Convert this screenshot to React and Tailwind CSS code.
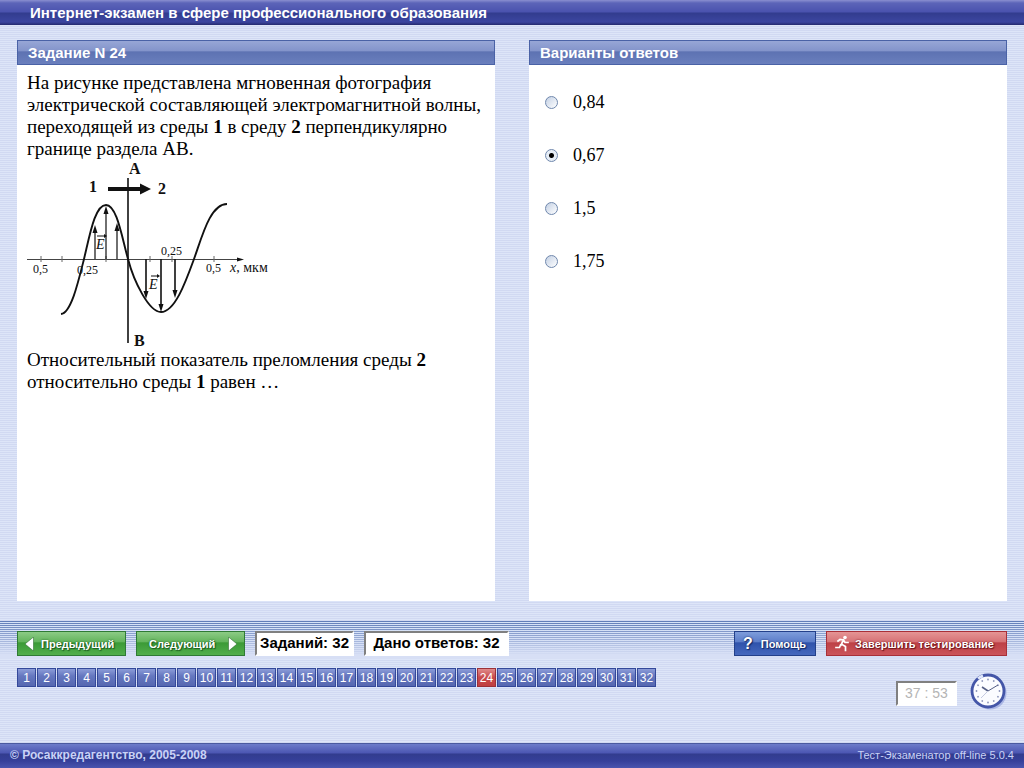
import { useState } from 'react'

const answers = ['0,84', '0,67', '1,5', '1,75']

const stripes = 'bg-[repeating-linear-gradient(to_bottom,#d1d9f2_0px,#d1d9f2_1px,#dde5f8_1px,#dde5f8_2px)]'

const btnText = 'text-[11px] leading-[16px] font-bold whitespace-nowrap text-white'

const WaveChart = () => (
  <svg className="block overflow-visible" width="250" height="189" viewBox="0 0 250 189" role="img" aria-label="E(x)">
    <g fill="none" stroke="#111">
      <path d="M0 99.500H213" strokeWidth="1" stroke="#444" />
      <path d="M14 96v6M35 96v6M79 96v6M123 96v6M145 96v6M187 96v6" stroke="#666" />
      <path d="M101 18V183" strokeWidth="1.600" />
      <path
        d="M34 154C44 153 51 123 57 99C63 74 68 45 79 45C90 45 95 78 101 99C107 122 122 152 134 152C148 152 159 121 167 99C175 77 183 44 200 44"
        strokeWidth="1.900"
      />
      <path d="M68 99V69M79 99V50M90 99V67" strokeWidth="1.200" />
      <path d="M119 99V135M134 99V148M148 99V134" strokeWidth="1.600" />
      <path d="M81 29H114" strokeWidth="4" />
    </g>
    <g fill="#111">
      <path d="M124 29l-11-5.500v11z" />
      <path d="M217 99.500l-7-2v4z" />
      <path d="M68 65l-2.500 8h5zM79 46l-2.500 8h5zM90 63l-2.500 8h5z" />
      <path d="M119 139l-2.500-8h5zM134 152l-2.500-8h5zM148 138l-2.500-8h5z" />
      <path d="M70 75.500h7v-1.500l3 2-3 2v-1.500h-7zM124 115.500h6v-1.500l3 2-3 2v-1.500h-6z" />
    </g>
    <g fill="#111" fontFamily="'Liberation Serif', serif" fontSize="12">
      <text x="6" y="113">0,5</text>
      <text x="50" y="114">0,25</text>
      <text x="134" y="95">0,25</text>
      <text x="179" y="112">0,5</text>
      <text x="203" y="112" fontSize="14"><tspan fontStyle="italic">x</tspan>, мкм</text>
      <text x="69" y="89" fontSize="14" fontStyle="italic">E</text>
      <text x="122" y="129" fontSize="14" fontStyle="italic">E</text>
      <g fontSize="16" fontWeight="bold">
        <text x="62" y="32">1</text>
        <text x="131" y="34">2</text>
        <text x="102" y="14">A</text>
        <text x="107" y="186">B</text>
      </g>
    </g>
  </svg>
)

const RunnerIcon = () => (
  <svg width="14" height="17" viewBox="0 0 14 17" fill="none" stroke="#fff" strokeLinecap="square">
    <circle cx="10" cy="2.500" r="1.800" fill="#fff" stroke="none" />
    <path d="M3 6l2-1.500 3.500.500L10 7.500h3M8.500 5L6 10M7 9.500l3.500 2V15.500M5.500 10L4.500 12.500H1" strokeWidth="1.700" />
  </svg>
)

const ClockIcon = () => (
  <svg width="37" height="37" viewBox="0 0 37 37" fill="none">
    <circle cx="20" cy="20" r="16.500" fill="#aab6e4" />
    <circle cx="18" cy="18" r="16" fill="#fbfcff" stroke="#4456a8" strokeWidth="2.800" />
    <path d="M8 5.500A16 16 0 0 1 13 2.800" stroke="#dfe6fa" strokeWidth="2.800" />
    <g fill="#8a93b8">
      {Array.from({ length: 12 }).map((_, i) => (
        <circle key={i} cx="18" cy="6.500" r="0.900" transform={`rotate(${i * 30} 18 18)`} />
      ))}
    </g>
    <path d="M18 18L28 12" stroke="#555f85" />
    <path d="M18 18L12 14" stroke="#555f85" strokeWidth="1.600" />
    <path d="M18 18L11 25" stroke="#c4cae0" />
  </svg>
)

const Panel = ({ title, children }) => (
  <section className="flex flex-col bg-white">
    <h2 className="h-[25px] border border-[#4a62a6] bg-[linear-gradient(to_bottom,#97a6d6_0%,#8293ca_45%,#5d72b2_46%,#6a7fbd_100%)] px-[10px] text-[15px] leading-[23px] font-bold text-white">
      {title}
    </h2>
    {children}
  </section>
)

const App = () => {
  const [answer, setAnswer] = useState(1)
  const [task, setTask] = useState(24)

  return (
    <div className={`flex min-h-screen flex-col font-['Liberation_Sans',sans-serif] ${stripes}`}>
      <header className="h-[25px] bg-[linear-gradient(to_bottom,#8a8fd0_0px,#5c64b8_3px,#4a52ae_12px,#323c8e_13px,#3c46a0_22px,#252a6e_25px)] px-[30px]">
        <h1 className="text-[15px] leading-[25px] font-bold text-white">
          Интернет-экзамен в сфере профессионального образования
        </h1>
      </header>

      <main className="grid flex-1 grid-cols-2 gap-[34px] px-[17px] pt-[15px] pb-[20px]">
        <Panel title="Задание N 24">
          <div className="px-[10px] pt-[7px] font-['Liberation_Serif',serif] text-[19px] leading-[22px] text-black">
            <p>
              На рисунке представлена мгновенная фотография<br />
              электрической составляющей электромагнитной волны,<br />
              переходящей из среды <b>1</b> в среду <b>2</b> перпендикулярно<br />
              границе раздела АВ.
            </p>
            <WaveChart />
            <p>
              Относительный показатель преломления среды <b>2</b><br />
              относительно среды <b>1</b> равен …
            </p>
          </div>
        </Panel>

        <Panel title="Варианты ответов">
          <div className="flex flex-col gap-[31px] px-[16px] pt-[26px]">
            {answers.map((text, i) => (
              <label key={text} className="flex items-center gap-[15px] font-['Liberation_Serif',serif] text-[18px] leading-[22px] text-black">
                <input
                  type="radio"
                  name="answer"
                  checked={answer === i}
                  onChange={() => setAnswer(i)}
                  className="size-[13px] appearance-none rounded-full border border-[#7088ad] bg-[linear-gradient(135deg,#c3d0e4,#ffffff)] checked:bg-[radial-gradient(circle,#000_2px,#e6edf6_3px)]"
                />
                {text}
              </label>
            ))}
          </div>
        </Panel>
      </main>

      <div className="flex h-[122px] flex-col bg-[linear-gradient(to_bottom,transparent,#d7dff5_90%),repeating-linear-gradient(to_bottom,#5f7cb8_0px,#5f7cb8_1px,#d5e2f7_1px,#d5e2f7_2px)] bg-[length:100%_38px] bg-no-repeat px-[17px] pt-[10px]">
        <div className="flex gap-[10px]">
          <button className={`flex h-[25px] w-[109px] items-center gap-[7px] border border-[#2f7a35] bg-[linear-gradient(to_bottom,#8ccb85_0%,#62b35b_45%,#3b9a36_46%,#52ae4c_100%)] pl-[7px] [text-shadow:0_0_2px_#1c5c20,1px_1px_1px_#1c5c20] ${btnText}`}>
            <svg width="9" height="14" viewBox="0 0 9 14"><path d="M8.500 0v14L0 7z" fill="#fff" stroke="#1c5c20" strokeWidth="0.500" /></svg>
            Предыдущий
          </button>
          <button className={`flex h-[25px] w-[109px] items-center justify-between border border-[#2f7a35] bg-[linear-gradient(to_bottom,#8ccb85_0%,#62b35b_45%,#3b9a36_46%,#52ae4c_100%)] pr-[7px] pl-[12px] [text-shadow:0_0_2px_#1c5c20,1px_1px_1px_#1c5c20] ${btnText}`}>
            Следующий
            <svg width="9" height="14" viewBox="0 0 9 14"><path d="M.500 0v14L9 7z" fill="#fff" stroke="#1c5c20" strokeWidth="0.500" /></svg>
          </button>
          <p className="h-[25px] w-[99px] border-2 border-t-[#808080] border-r-white border-b-white border-l-[#808080] bg-white text-center text-[15px] leading-[20px] font-bold whitespace-nowrap text-black">
            Заданий: 32
          </p>
          <p className="h-[25px] w-[145px] border-2 border-t-[#808080] border-r-white border-b-white border-l-[#808080] bg-white text-center text-[15px] leading-[20px] font-bold whitespace-nowrap text-black">
            Дано ответов: 32
          </p>
          <button className={`ml-auto flex h-[25px] w-[82px] items-center gap-[8px] border border-[#23408a] bg-[linear-gradient(to_bottom,#7e9ddb_0%,#5b7cc8_45%,#2f52ab_46%,#4568bd_100%)] pl-[8px] [text-shadow:0_0_2px_#142a68,1px_1px_1px_#142a68] ${btnText}`}>
            <span className="text-[16px]">?</span>
            Помощь
          </button>
          <button className={`flex h-[25px] w-[181px] items-center gap-[6px] border border-[#a83038] bg-[linear-gradient(to_bottom,#e59494_0%,#d57074_45%,#bd4046_46%,#cb555a_100%)] pl-[8px] [text-shadow:0_0_2px_#6e161c,1px_1px_1px_#6e161c] ${btnText}`}>
            <RunnerIcon />
            Завершить тестирование
          </button>
        </div>

        <nav className="mt-[12px] flex gap-px">
          {Array.from({ length: 32 }).map((_, i) => (
            <button
              key={i}
              onClick={() => setTask(i + 1)}
              className={`h-[19px] w-[19px] border text-center text-[12px] leading-[19px] text-white ${
                task === i + 1
                  ? 'border-[#9c3038] bg-[linear-gradient(to_bottom,#e08a8a,#c84a4c_50%,#c04040)]'
                  : 'border-[#34489a] bg-[linear-gradient(to_bottom,#8c9cd8,#6678c0_40%,#5668b0)]'
              }`}
            >
              {i + 1}
            </button>
          ))}
        </nav>

        <div className="-mt-[14px] flex items-center justify-end gap-[13px]">
          <time className="mt-[3px] h-[25px] w-[61px] border-2 border-t-[#808080] border-r-white border-b-white border-l-[#808080] bg-white text-center text-[14px] leading-[21px] text-[#b4b4b4]">
            37 : 53
          </time>
          <ClockIcon />
        </div>
      </div>

      <footer className="flex h-[25px] justify-between border-t border-[#4a5aa0] bg-[linear-gradient(to_bottom,#6c7cca_0px,#4c56b2_9px,#323c8e_10px,#36409a_17px,#4a54ae_24px)] px-[10px] text-[12px] leading-[23px] text-[#c9d2f6]">
        <span className="font-bold">© Росаккредагентство, 2005-2008</span>
        <span className="text-[11px]">Тест-Экзаменатор off-line 5.0.4</span>
      </footer>
    </div>
  )
}

export default App
